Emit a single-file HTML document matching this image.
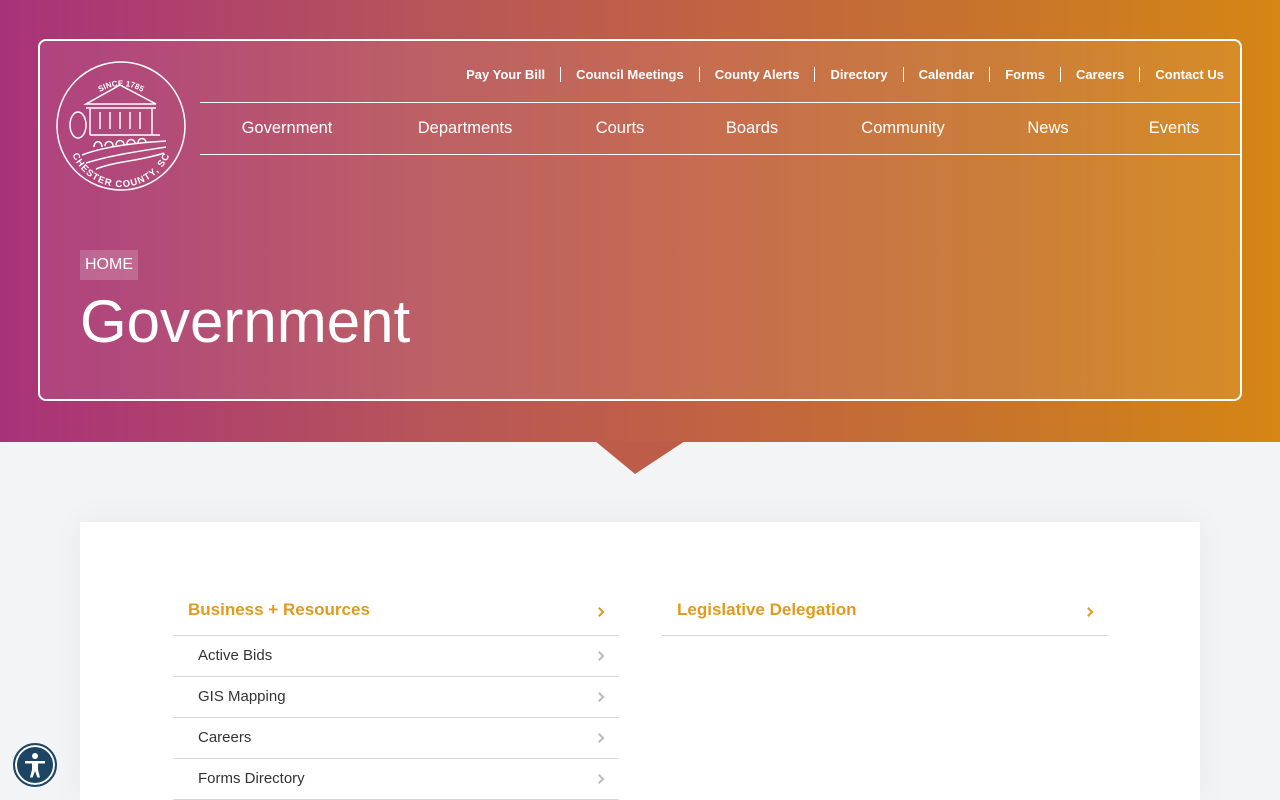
<!DOCTYPE html>
<html><head><meta charset="utf-8"><style>
*{box-sizing:border-box;margin:0;padding:0}
html,body{width:1280px;height:800px;overflow:hidden}
body{background:#f3f4f6;font-family:"Liberation Sans",sans-serif;position:relative}
.hero{position:absolute;left:0;top:0;width:1280px;height:442px;background:linear-gradient(90deg,#a8327a 0%,#b85658 35%,#c05e48 50%,#c6722e 75%,#d58614 100%)}
.tri{position:absolute;left:595px;top:441px;width:90px;height:33px;background:#bd5c48;clip-path:polygon(0 0,100% 0,44.5% 100%)}
.box{position:absolute;left:38px;top:39px;width:1204px;height:362px;border:2px solid #fff;border-radius:8px;background:rgba(255,255,255,0.07)}
.util{position:absolute;right:16px;top:26px;display:flex;font-size:13px;font-weight:bold;color:#fff}
.util span{padding:0 15px;border-left:1px solid #fff;line-height:15px}
.util span:first-child{border-left:none}
.util span:last-child{padding-right:0}
.nav{position:absolute;left:160px;right:0;top:61px;height:53px;border-top:1px solid #fff;border-bottom:1px solid #fff;color:#fff;font-size:16.5px}
.nav span{position:absolute;top:16px;transform:translateX(-50%);white-space:nowrap}
.crumb{position:absolute;left:40px;top:209px;background:rgba(255,255,255,0.18);color:#fff;font-size:16px;padding:6px 5px}
.h1{position:absolute;left:40px;top:246px;color:#fff;font-size:60px;font-weight:300}
.card{position:absolute;left:80px;top:522px;width:1120px;height:278px;background:#fff;box-shadow:0 0 30px rgba(0,0,0,0.05)}
.col{position:absolute;top:66px;width:446px}
.hd{height:48px;border-bottom:1px solid #d6d6d6;color:#e09a1e;font-weight:bold;font-size:17px;padding:12px 15px;position:relative}
.row{height:41px;border-bottom:1px solid #d6d6d6;font-size:15px;color:#333;padding:11px 25px;position:relative}
.chev{position:absolute;right:16px;top:50%;width:7px;height:7px;border-right:2px solid #bbb;border-top:2px solid #bbb;transform:translateY(-50%) rotate(45deg)}
.hd .chev{border-color:#e09a1e}
.acc{position:absolute;left:13px;top:743px;width:44px;height:44px;border-radius:50%;background:#1c4563;border:2px solid #1c4563;box-shadow:inset 0 0 0 2px #fff}
</style></head><body>
<div class="hero"></div><div class="tri"></div>
<div class="box">
<svg style="position:absolute;left:14px;top:18px" width="134" height="134" viewBox="0 0 134 134" fill="none" stroke="#fff" stroke-width="1.5">
<defs><path id="top" d="M27 67a40 40 0 0 1 80 0"/><path id="bot" d="M14 75a53 53 0 0 0 106 0"/></defs>
<circle cx="67" cy="67" r="64"/>
<path d="M32 45 L66 26 L102 45 Z M32 49 H102 M36 50 V76 M98 50 V76"/>
<path d="M46 53v17M56 53v17M66 53v17M76 53v17M86 53v17"/>
<path d="M36 76H106M40 88c0-7 8-7 8 0M51 87c0-6 8-6 8 0M62 86c0-6 8-6 8 0M73 85c0-6 8-6 8 0M84 84c0-6 8-6 8 0"/>
<ellipse cx="24" cy="66" rx="8" ry="13"/>
<path d="M28 96c20-8 50-12 84-14M32 104c25-8 55-12 80-16M42 110c20-8 45-8 68-16"/>
<text fill="#fff" stroke="none" font-size="8" font-weight="bold"><textPath href="#top" startOffset="50%" text-anchor="middle">SINCE 1785</textPath></text>
<text fill="#fff" stroke="none" font-size="9.5" font-weight="bold" letter-spacing="1"><textPath href="#bot" startOffset="50%" text-anchor="middle">CHESTER COUNTY, SC</textPath></text>
</svg>
<div class="util"><span>Pay Your Bill</span><span>Council Meetings</span><span>County Alerts</span><span>Directory</span><span>Calendar</span><span>Forms</span><span>Careers</span><span>Contact Us</span></div>
<div class="nav"><span style="left:87px">Government</span><span style="left:265px">Departments</span><span style="left:420px">Courts</span><span style="left:552px">Boards</span><span style="left:703px">Community</span><span style="left:848px">News</span><span style="left:974px">Events</span></div>
<div class="crumb">HOME</div>
<div class="h1">Government</div>
</div>
<div class="card">
<div class="col" style="left:93px">
<div class="hd">Business + Resources<i class="chev"></i></div>
<div class="row">Active Bids<i class="chev"></i></div>
<div class="row">GIS Mapping<i class="chev"></i></div>
<div class="row">Careers<i class="chev"></i></div>
<div class="row">Forms Directory<i class="chev"></i></div>
</div>
<div class="col" style="left:582px">
<div class="hd">Legislative Delegation<i class="chev"></i></div>
</div>
</div>
<div class="acc"><svg width="40" height="40" viewBox="0 0 40 40" fill="#fff"><circle cx="20" cy="11" r="3"/><path d="M10 16h20v2.5h-7v6l2 8h-2.6L20 26l-2.4 6.5H15l2-8v-6h-7z"/></svg></div>
</body></html>
